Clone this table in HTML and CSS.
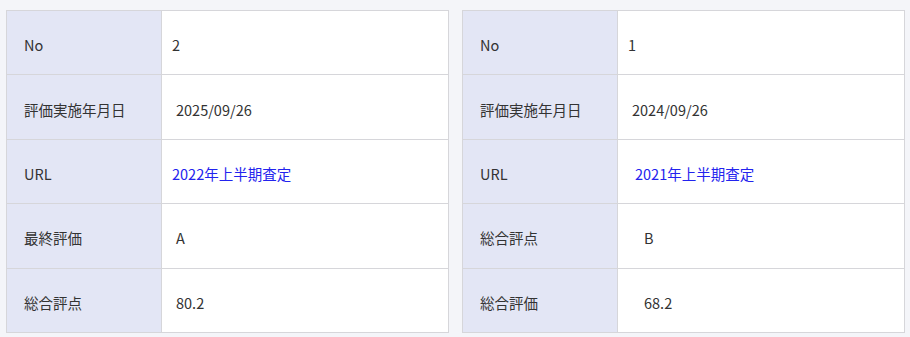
FILE: index.html
```html
<!DOCTYPE html>
<html lang="ja">
<head>
<meta charset="utf-8">
<title>評価履歴</title>
<link rel="stylesheet" href="styles.css">
</head>
<body>
<div class="page">
  <table class="detail">
    <tr><th>No</th><td>2</td></tr>
    <tr><th>評価実施年月日</th><td class="ind1">2025/09/26</td></tr>
    <tr><th>URL</th><td><a href="#">2022年上半期査定</a></td></tr>
    <tr><th>最終評価</th><td class="ind1">A</td></tr>
    <tr><th>総合評点</th><td class="ind1">80.2</td></tr>
  </table>
  <table class="detail">
    <tr><th>No</th><td>1</td></tr>
    <tr><th>評価実施年月日</th><td class="ind1">2024/09/26</td></tr>
    <tr><th>URL</th><td class="ind2"><a href="#">2021年上半期査定</a></td></tr>
    <tr><th>総合評点</th><td class="ind3">B</td></tr>
    <tr><th>総合評価</th><td class="ind3">68.2</td></tr>
  </table>
</div>
</body>
</html>
```
FILE: styles.css
```css
html, body {
  margin: 0;
  padding: 0;
  background: #f4f5f9;
}
body {
  font-family: "Noto Sans CJK JP", "Noto Sans", sans-serif;
  font-size: 14.5px;
  color: #333;
}
.page {
  display: flex;
  gap: 13px;
  padding: 10px 5px 0 6px;
}
.detail {
  width: 443px;
  border-collapse: collapse;
  background: #fff;
  border: 1px solid #d3d3d7;
  table-layout: fixed;
}
.detail th,
.detail td {
  border: 1px solid #d6d6da;
  height: 64.4px;
  box-sizing: border-box;
  padding: 4px 10px 0 10px;
  vertical-align: middle;
  text-align: left;
  font-weight: normal;
}
.detail th {
  width: 155px;
  padding-left: 17px;
  background: #e3e6f5;
  color: #333;
}
.detail td {
  color: #333;
}
.detail td.ind1 { padding-left: 14px; }
.detail td.ind2 { padding-left: 17px; }
.detail td.ind3 { padding-left: 26px; }
.detail a {
  color: #2323ee;
  text-decoration: none;
}
```
